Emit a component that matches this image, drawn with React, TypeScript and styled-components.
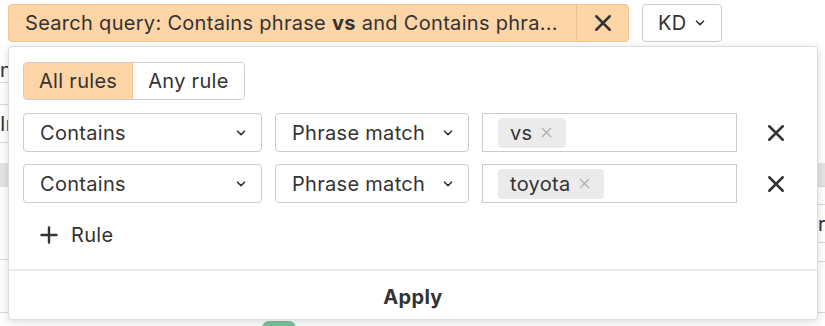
import React from 'react';
import styled, { createGlobalStyle } from 'styled-components';

const GlobalStyle = createGlobalStyle`
  html, body {
    margin: 0;
    padding: 0;
    background: #fff;
  }
  body {
    font-family: Inter, "Noto Sans", Arial, sans-serif;
    font-size: 20px;
    letter-spacing: 0.3px;
    color: #333;
  }
`;

const Page = styled.div`
  position: relative;
  width: 825px;
  height: 326px;
  overflow: hidden;
`;

const Toolbar = styled.div`
  display: flex;
  align-items: center;
  gap: 13px;
  padding: 4px 8px 0;
  height: 42px;
  box-sizing: border-box;
`;

const Chip = styled.div`
  display: flex;
  width: 621px;
  height: 38px;
  box-sizing: border-box;
  background: #fdd5a6;
  border: 1px solid #f2c592;
  border-radius: 4px;
`;

const ChipLabel = styled.div`
  flex: 1;
  min-width: 0;
  padding: 0 16px;
  line-height: 36px;
  white-space: nowrap;
  b {
    font-weight: 700;
  }
`;

const ChipClose = styled.div`
  width: 51px;
  display: flex;
  align-items: center;
  justify-content: center;
  border-left: 1px solid #eebd88;
`;

const KdButton = styled.div`
  display: flex;
  align-items: center;
  gap: 9px;
  height: 38px;
  padding: 0 16px 0 15px;
  box-sizing: border-box;
  border: 1px solid #ccc;
  border-radius: 4px;
  background: #fff;
`;

const Table = styled.div`
  display: flex;
  margin-top: 4px;
`;

const Column = styled.div<{ $width: number }>`
  width: ${p => p.$width}px;
  flex-shrink: 0;
  display: flex;
  flex-direction: column;
`;

const Cell = styled.div<{ $h: number; $band?: boolean; $line?: boolean; $pad?: number; $bottom?: boolean }>`
  height: ${p => p.$h}px;
  box-sizing: border-box;
  background: ${p => (p.$band ? '#e4e4e4' : 'transparent')};
  border-bottom: ${p => (p.$line ? '1px solid #d8d8d8' : 'none')};
  padding-left: ${p => p.$pad ?? 0}px;
  display: flex;
  align-items: ${p => (p.$bottom ? 'flex-end' : 'center')};
  white-space: nowrap;
`;

const GreenPill = styled.div`
  width: 34px;
  height: 14px;
  margin-top: 10px;
  border-radius: 7px;
  background: #7cc39a;
`;

const Panel = styled.div`
  position: absolute;
  top: 46px;
  left: 8px;
  width: 810px;
  height: 274px;
  box-sizing: border-box;
  background: #fff;
  border: 1px solid #ddd;
  border-radius: 4px;
  box-shadow: 0 2px 10px rgba(0, 0, 0, 0.15);
  display: flex;
  flex-direction: column;
`;

const Body = styled.div`
  flex: 1;
  padding: 15px 0 0 14px;
  display: flex;
  flex-direction: column;
`;

const Segmented = styled.div`
  display: flex;
  align-self: flex-start;
  height: 38px;
  box-sizing: border-box;
  border: 1px solid #ccc;
  border-radius: 4px;
  overflow: hidden;
`;

const Segment = styled.div<{ $active?: boolean }>`
  display: flex;
  align-items: center;
  padding: 0 15px;
  background: ${p => (p.$active ? '#fdd5a6' : '#fff')};
  border-right: ${p => (p.$active ? '1px solid #f2c592' : 'none')};
`;

const Rules = styled.div`
  display: flex;
  flex-direction: column;
  gap: 12px;
  margin-top: 13px;
`;

const RuleRow = styled.div`
  display: flex;
  align-items: center;
  gap: 13px;
  height: 39px;
`;

const Select = styled.div<{ $width: number }>`
  width: ${p => p.$width}px;
  flex-shrink: 0;
  height: 39px;
  box-sizing: border-box;
  border: 1px solid #ccc;
  border-radius: 4px;
  display: flex;
  align-items: center;
  justify-content: space-between;
  padding: 0 15px 0 16px;
`;

const TagInput = styled.div`
  width: 255px;
  flex-shrink: 0;
  height: 39px;
  box-sizing: border-box;
  border: 1px solid #ccc;
  display: flex;
  align-items: center;
  padding-left: 15px;
`;

const Tag = styled.div`
  display: flex;
  align-items: center;
  gap: 9px;
  height: 30px;
  padding: 0 14px 0 12px;
  border-radius: 4px;
  background: #ebebeb;
`;

const RemoveRule = styled.div`
  width: 52px;
  flex-shrink: 0;
  display: flex;
  justify-content: center;
`;

const AddRule = styled.div`
  display: flex;
  align-items: center;
  gap: 13px;
  margin-top: 20px;
  padding-left: 17px;
`;

const Footer = styled.div`
  height: 50px;
  box-sizing: border-box;
  padding-top: 3px;
  border-top: 2px solid #ebebeb;
  display: flex;
  align-items: center;
  justify-content: center;
  font-weight: 700;
`;

const Chevron = () => (
  <svg width="10" height="6" viewBox="0 0 10 6" fill="none">
    <path d="M1.5 1.2 L5 4.6 L8.5 1.2" stroke="#333" strokeWidth="1.6" strokeLinecap="round" strokeLinejoin="round" />
  </svg>
);

const Cross = ({ size, color, width }: { size: number; color: string; width: number }) => (
  <svg width={size} height={size} viewBox="0 0 16 16" fill="none">
    <path d="M2 2 L14 14 M14 2 L2 14" stroke={color} strokeWidth={width} strokeLinecap="round" />
  </svg>
);

const Plus = () => (
  <svg width="18" height="18" viewBox="0 0 18 18" fill="none">
    <path d="M9 1.5 V16.5 M1.5 9 H16.5" stroke="#333" strokeWidth="2.4" strokeLinecap="round" />
  </svg>
);

const rules = [
  { op: 'Contains', match: 'Phrase match', value: 'vs' },
  { op: 'Contains', match: 'Phrase match', value: 'toyota' },
];

const App: React.FC = () => (
  <Page>
    <GlobalStyle />
    <Toolbar>
      <Chip>
        <ChipLabel>
          Search query: Contains phrase <b>vs</b> and Contains phra...
        </ChipLabel>
        <ChipClose>
          <Cross size={18} color="#333" width={2.2} />
        </ChipClose>
      </Chip>
      <KdButton>
        KD
        <Chevron />
      </KdButton>
    </Toolbar>

    <Table>
      <Column $width={818}>
        <Cell $h={37} $line $bottom>n</Cell>
        <Cell $h={22} $line />
        <Cell $h={38} $line>Ir</Cell>
        <Cell $h={20} />
        <Cell $h={24} $band />
        <Cell $h={73} $line />
        <Cell $h={53} $line />
        <Cell $h={20} $pad={262}>
          <GreenPill />
        </Cell>
      </Column>
      <Column $width={7}>
        <Cell $h={117} />
        <Cell $h={24} $band $line />
        <Cell $h={18} $line />
        <Cell $h={38} $line>r</Cell>
        <Cell $h={19} $line />
        <Cell $h={51} $line />
      </Column>
    </Table>

    <Panel>
      <Body>
        <Segmented>
          <Segment $active>All rules</Segment>
          <Segment>Any rule</Segment>
        </Segmented>
        <Rules>
          {rules.map((r, i) => (
            <RuleRow key={i}>
              <Select $width={239}>
                {r.op}
                <Chevron />
              </Select>
              <Select $width={194}>
                {r.match}
                <Chevron />
              </Select>
              <TagInput>
                <Tag>
                  {r.value}
                  <Cross size={11} color="#aaa" width={2} />
                </Tag>
              </TagInput>
              <RemoveRule>
                <Cross size={18} color="#333" width={2.2} />
              </RemoveRule>
            </RuleRow>
          ))}
        </Rules>
        <AddRule>
          <Plus />
          Rule
        </AddRule>
      </Body>
      <Footer>Apply</Footer>
    </Panel>
  </Page>
);

export default App;
